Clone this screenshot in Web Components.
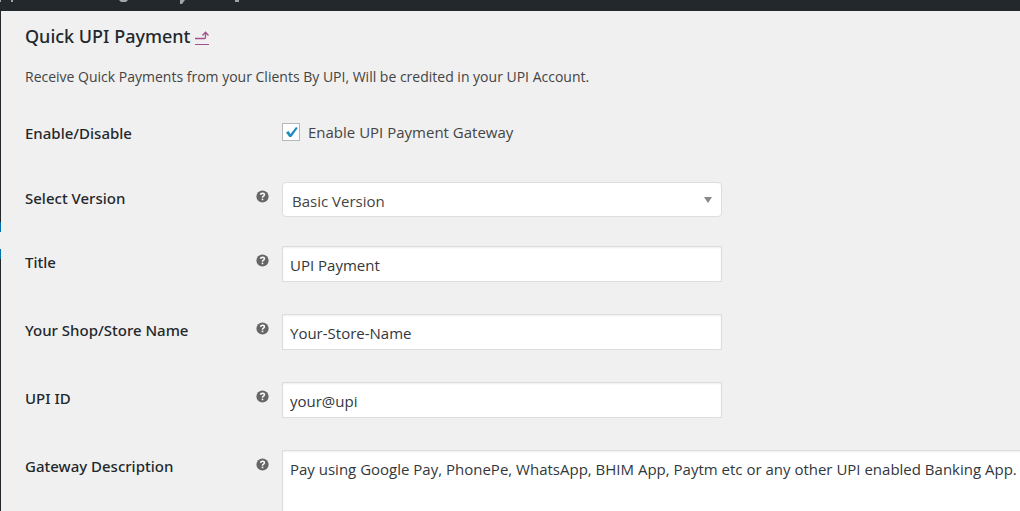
<!DOCTYPE html>
<html lang="en">
<head>
<meta charset="utf-8">
<title>Quick UPI Payment</title>
<style>
html,body{margin:0;height:100%;overflow:hidden}
body{background:#f0f0f0;color:#444;font:15px/20px "Open Sans","Noto Sans",sans-serif}
</style>
</head>
<body>
<admin-page>
  <settings-heading slot="head" name="Quick UPI Payment">Receive Quick Payments from your Clients By UPI, Will be credited in your UPI Account.</settings-heading>
  <setting-row kind="check" label="Enable/Disable" value="Enable UPI Payment Gateway"></setting-row>
  <setting-row kind="select" label="Select Version" value="Basic Version"></setting-row>
  <setting-row kind="text" label="Title" value="UPI Payment"></setting-row>
  <setting-row kind="text" label="Your Shop/Store Name" value="Your-Store-Name"></setting-row>
  <setting-row kind="text" label="UPI ID" value="your@upi"></setting-row>
  <setting-row kind="area" label="Gateway Description" value="Pay using Google Pay, PhonePe, WhatsApp, BHIM App, Paytm etc or any other UPI enabled Banking App."></setting-row>
</admin-page>
<script>
class AdminPage extends HTMLElement{
  constructor(){
    super();
    this.attachShadow({mode:"open"}).innerHTML=`<style>
:host{display:flex;flex-direction:column;height:100vh;overflow:hidden}
header{flex:none;height:11px;background:#23282d}
header svg{display:block}
.body{flex:1;display:flex;min-height:0}
nav{flex:none;width:1px;display:flex;flex-direction:column;background:#23282d}
nav i{flex:none}
.before{height:211px}.item{height:10px;background:#0073aa}.arrow{height:17px;background:#f0f0f0}
main{flex:1;min-width:0;padding:15px 0 0 24px}
</style>
<header><svg width="260" height="11" aria-hidden="true"><g fill="#a0a5aa"><path d="M0 0h1v2h-1zM11 0h2v2h-2zM119 0h9l-2 2h-5zM180 0h5l-3 4h-2zM235 0h4v2h-4z"/></g></svg></header>
<div class="body"><nav><i class="before"></i><i class="item"></i><i class="arrow"></i><i class="item"></i></nav>
<main><slot name="head"></slot><slot></slot></main></div>`;
  }
}
customElements.define("admin-page",AdminPage);

class SettingsHeading extends HTMLElement{
  constructor(){
    super();
    this.attachShadow({mode:"open"}).innerHTML=`<style>
:host{display:block;padding-bottom:30px}
h2{display:flex;gap:4px;align-items:center;margin:0;color:#23282d;font-family:"Noto Sans",sans-serif;font-size:18px;line-height:20px;font-weight:500}
a{display:block;height:14px;padding-top:4px}svg{display:block}
p{margin:21px 0 0;font-size:14px;line-height:20px}
</style>
<h2><span></span><a href="#payments" aria-label="Return to payments"><svg width="14" height="14" viewBox="0 0 14 14" fill="none" stroke="#a3508f"><path d="M0 7.500H9.500Q10.500 7.500 10.500 6.500V1.500M7.500 4.500L10.500 1.300L13.500 4.500" stroke-width="1.300"/><path d="M0 13.500H14"/></svg></a></h2><p><slot></slot></p>`;
    this.shadowRoot.querySelector("span").textContent=this.getAttribute("name");
  }
}
customElements.define("settings-heading",SettingsHeading);

class HelpTip extends HTMLElement{
  constructor(){
    super();
    this.attachShadow({mode:"open"}).innerHTML=`<style>:host{display:block}svg{display:block}</style>
<svg width="13" height="13" viewBox="0 0 13 13" role="img" aria-label="Help"><circle cx="6.500" cy="6.500" r="6.100" fill="#666"/><path d="M4.600 4.900Q4.700 3.200 6.500 3.200Q8.400 3.200 8.400 4.800Q8.400 5.700 7.400 6.200Q6.500 6.700 6.500 7.700" fill="none" stroke="#fff" stroke-width="1.500"/><path d="M5.700 8.700h1.600v1.500h-1.600z" fill="#fff"/></svg>`;
  }
}
customElements.define("help-tip",HelpTip);

class SettingRow extends HTMLElement{
  constructor(){
    super();
    const kind=this.getAttribute("kind");
    const control={
      check:`<label class="check"><input id="field" type="checkbox" checked><span></span></label>`,
      select:`<div class="pick"><select id="field"><option></option></select><svg width="8" height="6" aria-hidden="true"><path d="M0 0h8L4 6z" fill="#888"/></svg></div>`,
      text:`<input id="field" type="text">`,
      area:`<textarea id="field" rows="4"></textarea>`
    }[kind];
    this.attachShadow({mode:"open"}).innerHTML=`<style>
:host{display:grid;grid-template-columns:231px 26px 1fr;align-items:start;margin-bottom:32px}
:host([kind=check]){margin-bottom:39px}
:host([kind=select]){margin-bottom:29px}
*{box-sizing:border-box}
.name{padding-top:6px;color:#23282d;font-family:"Noto Sans",sans-serif;font-weight:500}
help-tip{padding-top:8px}
input,select,textarea{font:inherit;color:#32373c;margin:0;border:1px solid #ddd;background:#fff;display:block;border-radius:0;outline:0;appearance:none}
input[type=text]{width:100%;max-width:440px;height:36px;padding:2px 7px 0;box-shadow:inset 0 1px 2px rgba(0,0,0,.07)}
textarea{width:calc(100% + 8px);height:92px;padding:8px 7px;resize:none;box-shadow:inset 0 1px 2px rgba(0,0,0,.07)}
.pick{position:relative;width:100%;max-width:440px}
select{width:100%;height:35px;padding:3px 9px 0;border-radius:4px;color:#444}
.pick svg{position:absolute;right:10px;top:15px;pointer-events:none}
.check{display:flex;gap:8px;align-items:center;height:20px;margin-top:5px}
input[type=checkbox]{width:18px;height:18px;border-color:#b4b9be;background:#fff url("data:image/svg+xml,%3Csvg xmlns='http://www.w3.org/2000/svg' viewBox='0 0 16 16'%3E%3Cpath d='M3 8.500L5.500 7L7.500 10L13 3L14.800 4L8.300 13H6.300z' fill='%231e8cbe'/%3E%3C/svg%3E")}
</style><label class="name" for="field"></label><span>${kind==="check"?"":"<help-tip></help-tip>"}</span>${control}`;
    const r=this.shadowRoot,v=this.getAttribute("value");
    r.querySelector(".name").textContent=this.getAttribute("label");
    if(kind==="check")r.querySelector(".check span").textContent=v;
    else if(kind==="select")r.querySelector("option").textContent=v;
    else r.querySelector("#field").value=v;
  }
}
customElements.define("setting-row",SettingRow);
</script>
</body>
</html>
